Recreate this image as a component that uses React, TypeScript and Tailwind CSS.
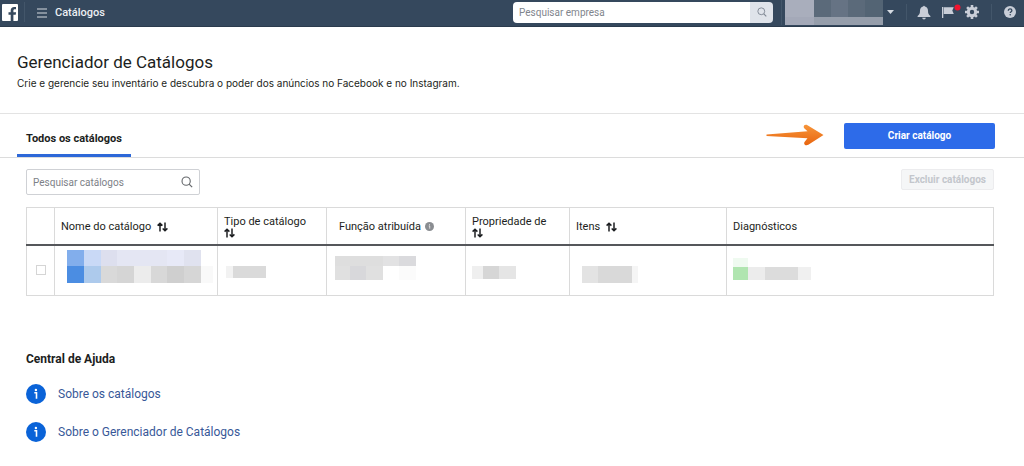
import { useState } from 'react';

type Block = [x: number, y: number, w: number, h: number, fill: string];

const accountBlocks: Block[] = [
  [0, 0, 29, 17, '#a9aebc'],
  [29, 0, 69, 17, '#5b6a7a'],
  [46, 0, 17, 17, '#667384'],
  [80, 0, 18, 17, '#536474'],
  [0, 17, 29, 8, '#a4a9b8'],
  [29, 17, 69, 8, '#969eab'],
];

const nameBlocks: Block[] = [
  [0, 0, 17, 16, '#82aeec'],
  [17, 0, 17, 16, '#c9d9f6'],
  [34, 0, 16, 16, '#dddfee'],
  [50, 0, 50, 16, '#e4e6f3'],
  [100, 0, 17, 16, '#e7e9f7'],
  [117, 0, 17, 16, '#e0e2ef'],
  [0, 16, 17, 17, '#4b8de2'],
  [17, 16, 17, 17, '#adcaec'],
  [34, 16, 16, 17, '#d9d9d9'],
  [50, 16, 17, 17, '#d5d5d5'],
  [67, 16, 17, 17, '#ececec'],
  [84, 16, 16, 17, '#d8d8d8'],
  [100, 16, 17, 17, '#cfcfcf'],
  [117, 16, 17, 17, '#d6d6d6'],
  [134, 16, 12, 17, '#f9f9f9'],
];

const typeBlocks: Block[] = [
  [0, 0, 7, 12, '#f2f2f2'],
  [7, 0, 33, 12, '#dadada'],
];

const roleBlocks: Block[] = [
  [0, 0, 48, 10, '#dedede'],
  [48, 0, 16, 10, '#e2e2e3'],
  [64, 0, 17, 10, '#dadadd'],
  [0, 10, 48, 14, '#e0e0e0'],
  [15, 10, 16, 14, '#d8d8db'],
  [64, 10, 17, 14, '#fbfbfb'],
];

const ownerBlocks: Block[] = [
  [0, 0, 11, 13, '#efefef'],
  [11, 0, 16, 13, '#d6d6d6'],
  [27, 0, 17, 13, '#e5e5e5'],
];

const itemBlocks: Block[] = [
  [0, 0, 16, 17, '#e3e3e3'],
  [16, 0, 34, 17, '#d9d9d9'],
  [50, 0, 6, 17, '#f5f5f5'],
];

const diagnosticBlocks: Block[] = [
  [0, 0, 15, 9, '#effaf0'],
  [0, 9, 15, 13, '#b0e5b0'],
  [15, 9, 17, 13, '#ececec'],
  [32, 9, 33, 13, '#dcdcdc'],
  [65, 9, 13, 13, '#f0f0f0'],
];

function Mosaic({ blocks, label }: { blocks: Block[]; label: string }) {
  const width = Math.max(...blocks.map(([x, , w]) => x + w));
  const height = Math.max(...blocks.map(([, y, , h]) => y + h));

  return (
    <svg width={width} height={height} className="block shrink-0" shapeRendering="crispEdges" role="img" aria-label={label}>
      {blocks.map(([x, y, w, h, fill]) => (
        <rect key={`${x}-${y}`} x={x} y={y} width={w} height={h} fill={fill} />
      ))}
    </svg>
  );
}

function SortIcon({ className }: { className?: string }) {
  return (
    <svg width="11" height="10" viewBox="0 0 11 10" fill="none" stroke="#1c1e21" strokeWidth="1.5" className={className} aria-hidden="true">
      <path d="M3 9.5V1.2M.6 3.6 3 1.2l2.4 2.4" />
      <path d="M8 .5v8.3M5.7 6.4 8 8.8l2.4-2.4" />
    </svg>
  );
}

function SearchIcon({ className }: { className: string }) {
  return (
    <svg viewBox="0 0 14 14" fill="none" stroke="currentColor" className={className} aria-hidden="true">
      <circle cx="6" cy="6" r="4.8" strokeWidth="1.3" />
      <path d="m9.5 9.5 3.5 3.5" strokeWidth="1.5" />
    </svg>
  );
}

function InfoIcon({ className }: { className: string }) {
  return (
    <svg viewBox="0 0 20 20" className={className} aria-hidden="true">
      <circle cx="10" cy="10" r="10" fill="currentColor" />
      <circle cx="9.9" cy="6" r="1.2" fill="#fff" />
      <path d="M8.3 8.800h2.200v6" fill="none" stroke="#fff" strokeWidth="1.6" />
    </svg>
  );
}

function TopBar() {
  return (
    <header className="flex h-[27px] items-center bg-[#35485d] border-b border-[#2b3b4d] pb-0.5 text-white">
      <a href="#" aria-label="Facebook" className="ml-0.5 mr-1.5">
        <svg width="16" height="17" viewBox="0 0 16 17" className="block">
          <rect width="16" height="17" rx="1" fill="#fff" />
          <path
            d="M8.7 17v-6.2H6.5V8.2h2.2V6.5c0-2.3 1.4-3.6 3.5-3.6.9 0 1.6.1 1.8.1v2.3h-1.2c-1.1 0-1.4.6-1.4 1.4v1.5h2.7l-.4 2.6h-2.3V17z"
            fill="#35485d"
          />
        </svg>
      </a>
      <button className="flex h-5 items-center gap-2 border-l border-[#43566a] pt-0.5 pl-3 text-[11px] font-medium text-[#eceff3]">
        <svg width="10" height="10" viewBox="0 0 10 10" stroke="#d5dae0" strokeWidth="1.2" aria-hidden="true">
          <path d="M0 1h10M0 5h10M0 9h10" />
        </svg>
        Catálogos
      </button>

      <form role="search" className="ml-auto flex h-[21px] w-[260px] overflow-hidden rounded-sm" onSubmit={(e) => e.preventDefault()}>
        <input
          type="text"
          aria-label="Pesquisar empresa"
          placeholder="Pesquisar empresa"
          className="min-w-0 flex-1 bg-white px-1.5 text-[10px] text-[#1c1e21] placeholder:text-[#7f858d] outline-none"
        />
        <button aria-label="Pesquisar" className="flex w-[23px] items-center justify-center bg-[#dfe3ea] text-[#7f8794]">
          <SearchIcon className="size-2.5" />
        </button>
      </form>

      <button className="ml-2 flex h-[25px] items-center gap-1 border-l border-[#43566a] pl-[3px]" aria-label="Conta">
        <Mosaic blocks={accountBlocks} label="Conta" />
        <svg width="7" height="4" viewBox="0 0 7 4" fill="#d5dae2" aria-hidden="true">
          <path d="M0 0h7L3.5 4z" />
        </svg>
      </button>

      <div className="ml-3 flex h-4 items-center border-l border-[#43566a] pl-2.5 text-[#c9ced8]">
        <button aria-label="Notificações">
          <svg width="14" height="15" viewBox="0 0 14 15" fill="currentColor" className="block">
            <path d="M6.2 1.5a.8.8 0 0 1 1.6 0C10 2 11 3.700 11 5.700c0 3 .8 4 2.400 5.200V12H.6v-1.100C2.200 9.700 3 8.700 3 5.700 3 3.700 4 2 6.200 1.500zM5.200 12.700h3.600a1.800 1.800 0 0 1-3.600 0z" />
          </svg>
        </button>
        <button aria-label="Páginas" className="ml-2.5 mr-1">
          <svg width="20" height="16" viewBox="0 0 20 16" className="block">
            <path d="M1 3h1.300v11H1zM2.800 3.200h10L11.300 6.500 12.800 10H2.800z" fill="currentColor" />
            <circle cx="16.500" cy="3.500" r="3" fill="#f0142f" />
          </svg>
        </button>
        <button aria-label="Configurações">
          <svg width="14" height="14" viewBox="0 0 14 14" className="block">
            <circle cx="7" cy="7" r="3.700" fill="none" stroke="currentColor" strokeWidth="3" />
            <path
              d="M7 0v2.500M7 11.500V14M0 7h2.500M11.500 7H14M2.100 2.100l1.700 1.700M10.200 10.200l1.700 1.700M2.100 11.900l1.700-1.700M10.200 3.800l1.700-1.700"
              stroke="currentColor"
              strokeWidth="2.600"
            />
          </svg>
        </button>
      </div>

      <div className="ml-3 mr-2 flex h-4 items-center border-l border-[#43566a] pl-3">
        <button aria-label="Ajuda">
          <svg width="12" height="12" viewBox="0 0 12 12" className="block">
            <circle cx="6" cy="6" r="6" fill="#c9ced8" />
            <path d="M4.300 4.700C4.300 3.500 5 2.900 6.100 2.900s1.800.6 1.800 1.500c0 1.200-1.700 1.300-1.700 2.700" fill="none" stroke="#35485d" strokeWidth="1.300" />
            <circle cx="6.200" cy="8.800" r=".8" fill="#35485d" />
          </svg>
        </button>
      </div>
    </header>
  );
}

function CatalogTable() {
  const [checked, setChecked] = useState(false);
  const th = 'border border-[#dadada] border-b-2 border-b-[#55575b] pt-0.5 pb-0 font-normal';
  const td = 'border border-[#dadada] py-0 align-top';

  return (
    <table className="mt-3 w-full table-fixed border-collapse text-left text-[11px] leading-[13px] text-[#1c1e21]">
      <colgroup>
        <col className="w-[28px]" />
        <col className="w-[163px]" />
        <col className="w-[109px]" />
        <col className="w-[139px]" />
        <col className="w-[104px]" />
        <col className="w-[157px]" />
        <col />
      </colgroup>
      <thead>
        <tr className="h-[37px]">
          <td className={th} />
          <th scope="col" className={`${th} pl-1.5`}>
            <span className="flex items-center gap-1.5">Nome do catálogo <SortIcon /></span>
          </th>
          <th scope="col" className={`${th} pl-1.5`}>
            Tipo de catálogo <SortIcon className="block" />
          </th>
          <th scope="col" className={`${th} pl-3`}>
            <span className="flex items-center gap-1">
              Função atribuída <InfoIcon className="size-[9px] text-[#8a8d91]" />
            </span>
          </th>
          <th scope="col" className={`${th} pl-1.5`}>
            Propriedade de <SortIcon className="block" />
          </th>
          <th scope="col" className={`${th} pl-1.5`}>
            <span className="flex items-center gap-1.5">Itens <SortIcon /></span>
          </th>
          <th scope="col" className={`${th} pl-1.5`}>Diagnósticos</th>
        </tr>
      </thead>
      <tbody>
        <tr className="h-[51px]">
          <td className="border border-[#dadada] p-0">
            <input
              type="checkbox"
              aria-label="Selecionar catálogo"
              checked={checked}
              onChange={(e) => setChecked(e.target.checked)}
              className="mx-auto block size-2.5 appearance-none border border-[#d5d5d5] bg-white checked:bg-[#2d6be9]"
            />
          </td>
          <td className={`${td} pl-3 pt-1`}><Mosaic blocks={nameBlocks} label="Catálogo" /></td>
          <td className={`${td} pl-2 pt-5`}><Mosaic blocks={typeBlocks} label="Tipo" /></td>
          <td className={`${td} pl-2 pt-2.5`}><Mosaic blocks={roleBlocks} label="Função" /></td>
          <td className={`${td} pl-1.5 pt-5`}><Mosaic blocks={ownerBlocks} label="Proprietário" /></td>
          <td className={`${td} pl-3 pt-5`}><Mosaic blocks={itemBlocks} label="Itens" /></td>
          <td className={`${td} pl-1.5 pt-3`}><Mosaic blocks={diagnosticBlocks} label="Diagnóstico" /></td>
        </tr>
      </tbody>
    </table>
  );
}

export default function App() {
  return (
    <div className="min-h-screen bg-white font-['Roboto','Liberation_Sans',sans-serif] text-[#1c1e21]">
      <TopBar />

      <section className="border-b border-[#e3e3e3] px-[17px] pt-6 pb-5">
        <h1 className="text-[17px] leading-[22px]">Gerenciador de Catálogos</h1>
        <p className="font-['Inter','Liberation_Sans',sans-serif] text-[10px] leading-5">
          Crie e gerencie seu inventário e descubra o poder dos anúncios no Facebook e no Instagram.
        </p>
      </section>

      <nav className="flex h-11 items-center justify-between border-b border-[#dcdcdc] pl-[17px] pr-[29px]">
        <a href="#" className="flex h-full items-center border-b-3 border-[#2d68d8] px-[9px] pt-2.5 text-[11px] font-bold">
          Todos os catálogos
        </a>
        <div className="flex items-center gap-5">
          <svg width="58" height="24" viewBox="0 0 58 24" aria-hidden="true">
            <defs>
              <linearGradient id="arrow" x1="0" y1="0" x2="0" y2="1">
                <stop offset="0" stopColor="#f7953a" />
                <stop offset="1" stopColor="#e8650f" />
              </linearGradient>
            </defs>
            <path
              d="M.5 10.600 41.500 7.200 38.500 4.500C36.500 2.300 38.500-.2 41.500 1.200L57.500 11 42.300 20.800c-2.800 1.500-5.300-.8-3.600-3.100L41.500 14.200.5 12z"
              fill="url(#arrow)"
            />
          </svg>
          <button className="h-[26px] w-[151px] rounded-xs bg-[#2d6be9] text-[10px] font-bold text-white">
            Criar catálogo
          </button>
        </div>
      </nav>

      <main className="pl-[26px] pr-[30px] pt-[11px]">
        <div className="flex items-start justify-between">
          <label className="flex h-[26px] w-[174px] items-center rounded-xs border border-[#cfd1d5] pl-1.5 pr-1.5 text-[#65686c]">
            <input
              type="text"
              aria-label="Pesquisar catálogos"
              placeholder="Pesquisar catálogos"
              className="min-w-0 flex-1 text-[10px] text-[#1c1e21] placeholder:text-[#7d8187] outline-none"
            />
            <SearchIcon className="size-3" />
          </label>
          <button disabled className="h-[21px] w-[93px] rounded-xs border border-[#ececee] bg-[#f5f6f7] text-[10px] font-bold text-[#c3c6cc]">
            Excluir catálogos
          </button>
        </div>

        <CatalogTable />

        <section className="mt-[53px] pb-6">
          <h2 className="text-xs leading-5 font-bold">Central de Ajuda</h2>
          <ul className="mt-3.5 flex flex-col gap-[17px] text-xs text-[#385898]">
            <li>
              <a href="#" className="flex items-center gap-3">
                <InfoIcon className="size-5 text-[#0a63d8]" />
                <span className="pt-px leading-5">Sobre os catálogos</span>
              </a>
            </li>
            <li>
              <a href="#" className="flex items-center gap-3">
                <InfoIcon className="size-5 text-[#0a63d8]" />
                <span className="pt-px leading-5">Sobre o Gerenciador de Catálogos</span>
              </a>
            </li>
          </ul>
        </section>
      </main>
    </div>
  );
}
